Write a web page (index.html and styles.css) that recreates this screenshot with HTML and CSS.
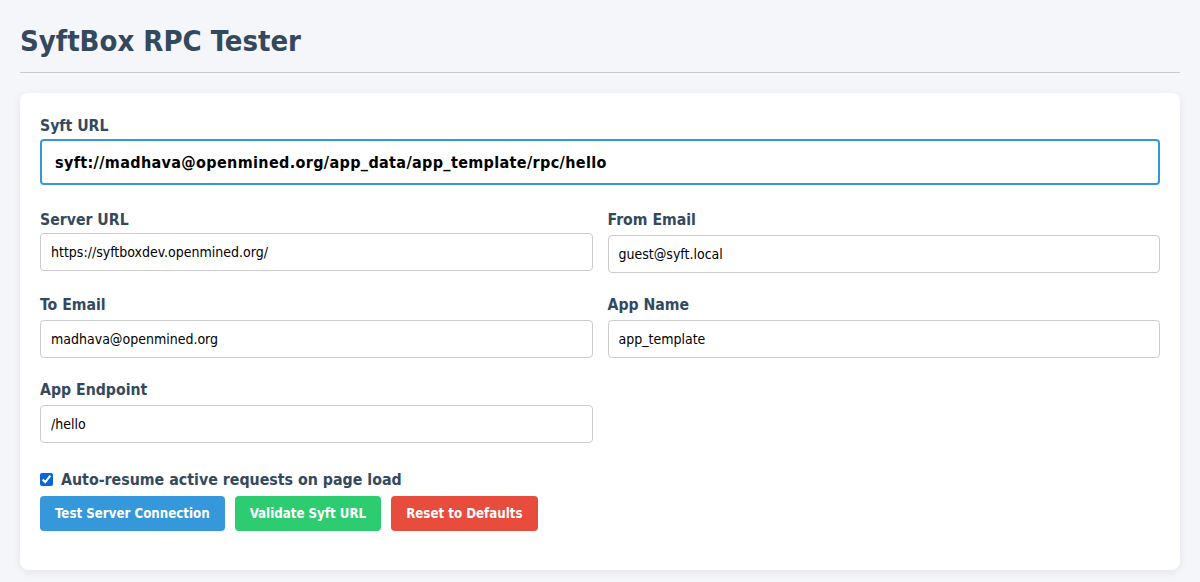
FILE: index.html
```html
<!DOCTYPE html>
<html>
<head>
<meta charset="utf-8">
<link rel="stylesheet" href="styles.css">
</head>
<body>
<h1 class="title">SyftBox RPC Tester</h1>
<div class="card">
  <div class="field">
    <label class="label">Syft URL</label>
    <input class="input input-main" type="text" value="syft://madhava@openmined.org/app_data/app_template/rpc/hello">
  </div>
  <div class="grid">
    <div class="field">
      <label class="label">Server URL</label>
      <input class="input" type="text" value="https://syftboxdev.openmined.org/">
    </div>
    <div class="field">
      <label class="label">From Email</label>
      <input class="input" type="text" value="guest@syft.local">
    </div>
    <div class="field">
      <label class="label">To Email</label>
      <input class="input" type="text" value="madhava@openmined.org">
    </div>
    <div class="field">
      <label class="label">App Name</label>
      <input class="input" type="text" value="app_template">
    </div>
    <div class="field">
      <label class="label">App Endpoint</label>
      <input class="input" type="text" value="/hello">
    </div>
  </div>
  <label class="check">
    <input type="checkbox" checked class="checkbox">
    <span>Auto-resume active requests on page load</span>
  </label>
  <div class="buttons">
    <button class="btn btn-blue">Test Server Connection</button>
    <button class="btn btn-green">Validate Syft URL</button>
    <button class="btn btn-red">Reset to Defaults</button>
  </div>
</div>
</body>
</html>
```
FILE: styles.css
```css
* { box-sizing: border-box; }
html, body { margin: 0; }
body {
  background: #f5f6fa;
  padding: 20px;
  font-family: "DejaVu Sans Condensed", "DejaVu Sans", sans-serif;
  color: #34495e;
}
.title {
  margin: 0 0 20px;
  padding: 6px 0 16px;
  font-size: 29px;
  font-weight: bold;
  line-height: 30px;
  color: #34495e;
  border-bottom: 1px solid #c8cacf;
}
.card {
  background: #fff;
  border-radius: 8px;
  box-shadow: 0 2px 8px rgba(0, 0, 0, 0.08);
  padding: 24px 20px 39px;
}
.field {
  display: flex;
  flex-direction: column;
}
.label {
  font-weight: bold;
  font-size: 15.7px;
  line-height: 18px;
  margin-bottom: 6px;
  color: #34495e;
}
.field + .grid { margin-top: 26px; }
.input {
  height: 38px;
  border: 1px solid #ccc;
  border-radius: 4px;
  padding: 0 10px;
  font-family: "DejaVu Sans Condensed", "DejaVu Sans", sans-serif;
  font-size: 14px;
  color: #000;
  background: #fff;
}
.input-main {
  height: 46px;
  border: 2px solid #3498db;
  padding: 0 13px;
  font-size: 16px;
  font-weight: bold;
  letter-spacing: 0.35px;
}
.field:first-child .label { margin-bottom: 4px; }
.grid {
  display: grid;
  grid-template-columns: 1fr 1fr;
  column-gap: 15px;
  row-gap: 23px;
}
.check {
  display: flex;
  align-items: center;
  gap: 8px;
  margin-top: 27px;
  font-weight: bold;
  font-size: 15.8px;
  color: #34495e;
}
.checkbox {
  margin: 0;
  width: 13px;
  height: 13px;
  accent-color: #0a66d8;
}
.buttons {
  display: flex;
  gap: 10px;
  margin-top: 7px;
}
.btn {
  height: 35px;
  padding: 0 15px;
  border: none;
  border-radius: 4px;
  color: #fff;
  font-family: "DejaVu Sans Condensed", "DejaVu Sans", sans-serif;
  font-weight: bold;
  font-size: 13.2px;
}
.btn-blue { background: #3498db; }
.btn-green { background: #2ecc71; }
.btn-red { background: #e74c3c; }
```
